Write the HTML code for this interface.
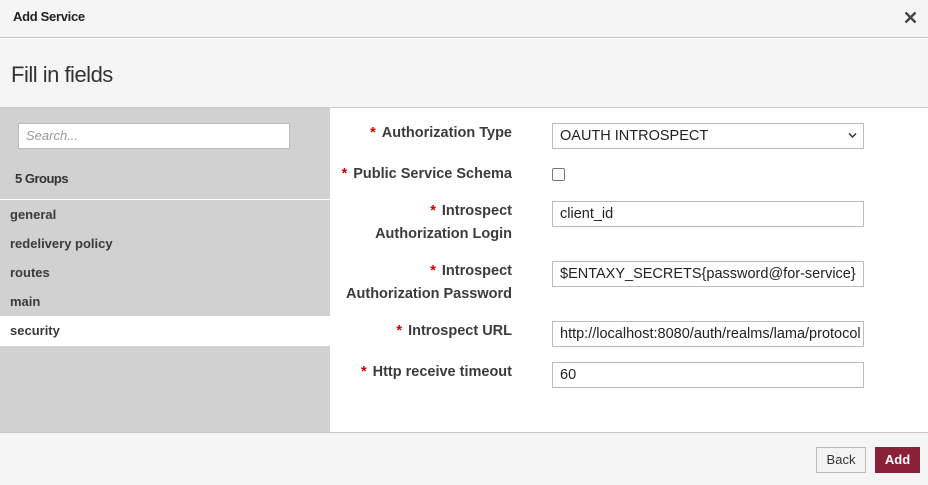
<!DOCTYPE html>
<html><head><style>
*{box-sizing:border-box;margin:0;padding:0}
body{width:928px;height:485px;overflow:hidden;font-family:"Liberation Sans",sans-serif;background:#fff;position:relative;color:#333}
.a{position:absolute}
.hdr{left:0;top:0;width:928px;height:38px;background:#f5f5f5;border-bottom:1px solid #c8c8c8}
.ttl{left:0;top:39px;width:928px;height:69px;background:#f5f5f5;border-bottom:1px solid #c8c8c8}
.side{left:0;top:108px;width:330px;height:325px;background:#d1d1d1}
.ftr{left:0;top:432px;width:928px;height:53px;background:#f5f5f5;border-top:1px solid #c8c8c8}
.inp{background:#fff;border:1px solid #bbb;height:26px;font-size:14.5px;padding:4px 7px;white-space:nowrap;overflow:hidden;color:#222}
.lbl{font-size:14.5px;font-weight:bold;color:#3c3c3c;text-align:right;width:340px;left:172px;line-height:23px}
.st{color:#c00;margin-right:6px}
.it{left:10px;font-size:13px;font-weight:bold;color:#3a3a3a}
</style></head><body>
<div class="a hdr"></div>
<div class="a" style="left:13px;top:9px;font-size:13px;font-weight:bold;letter-spacing:-0.3px;color:#222">Add Service</div>
<svg class="a" style="left:904px;top:11px" width="13" height="13" viewBox="0 0 13 13"><path d="M1.5 1.5L11.5 11.5M11.5 1.5L1.5 11.5" stroke="#444" stroke-width="2.4"/></svg>
<div class="a ttl"></div>
<div class="a" style="left:11px;top:62px;font-size:22px;color:#333;letter-spacing:-0.5px">Fill in fields</div>
<div class="a side"></div>
<div class="a inp" style="left:18px;top:123px;width:272px;color:#999;font-style:italic;font-size:13px">Search...</div>
<div class="a" style="left:15px;top:171px;font-size:13px;font-weight:bold;color:#333;letter-spacing:-0.5px">5 Groups</div>
<div class="a" style="left:0;top:199px;width:330px;height:1px;background:#fff"></div>
<div class="a it" style="top:207px">general</div>
<div class="a it" style="top:236px">redelivery policy</div>
<div class="a it" style="top:265px">routes</div>
<div class="a it" style="top:294px">main</div>
<div class="a" style="left:0;top:316px;width:330px;height:30px;background:#fff"></div>
<div class="a it" style="top:323px">security</div>

<div class="a lbl" style="top:122px"><span class="st">*</span>Authorization Type</div>
<div class="a inp" style="left:552px;top:123px;width:312px">OAUTH INTROSPECT</div>
<svg class="a" style="left:848px;top:132px" width="9" height="7" viewBox="0 0 9 7"><path d="M1 1.5L4.5 5L8 1.5" stroke="#333" stroke-width="1.5" fill="none"/></svg>
<div class="a lbl" style="top:163px"><span class="st">*</span>Public Service Schema</div>
<div class="a" style="left:552px;top:168px;width:13px;height:13px;border:1.5px solid #777;border-radius:2px;background:#fff"></div>
<div class="a lbl" style="top:200px"><span class="st">*</span>Introspect<br>Authorization Login</div>
<div class="a inp" style="left:552px;top:201px;width:312px">client_id</div>
<div class="a lbl" style="top:260px"><span class="st">*</span>Introspect<br>Authorization Password</div>
<div class="a inp" style="left:552px;top:261px;width:312px">$ENTAXY_SECRETS{password@for-service}</div>
<div class="a lbl" style="top:320px"><span class="st">*</span>Introspect URL</div>
<div class="a inp" style="left:552px;top:321px;width:312px">http://localhost:8080/auth/realms/lama/protocol</div>
<div class="a lbl" style="top:361px"><span class="st">*</span>Http receive timeout</div>
<div class="a inp" style="left:552px;top:362px;width:312px">60</div>

<div class="a ftr"></div>
<div class="a" style="left:816px;top:447px;width:50px;height:26px;background:#f3f3f3;border:1px solid #bbb;font-size:13px;color:#333;text-align:center;line-height:24px">Back</div>
<div class="a" style="left:875px;top:447px;width:45px;height:26px;background:#8b2139;color:#fff;font-size:13px;font-weight:bold;text-align:center;line-height:26px">Add</div>
</body></html>
